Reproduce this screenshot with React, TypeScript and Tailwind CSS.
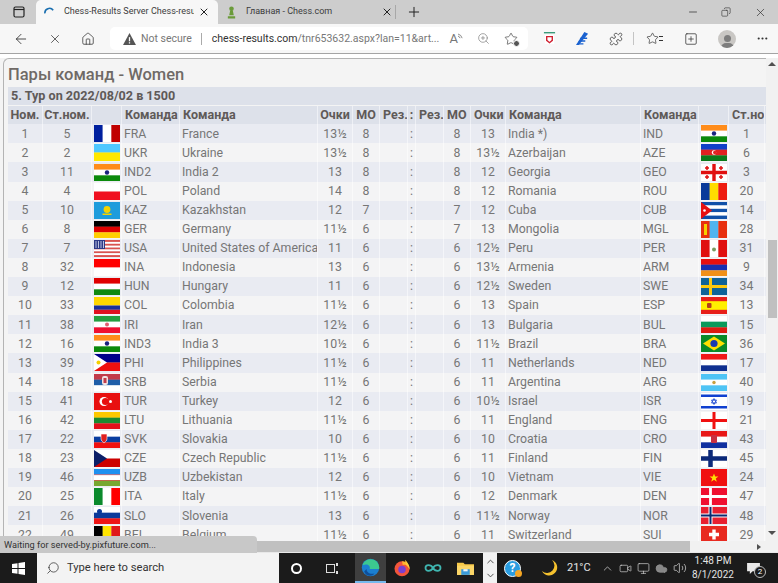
import React from 'react';
import { ArrowLeft, X, Home, ZoomIn, Star, Plus, Minus, Copy, MoreHorizontal, Search, ChevronUp, ChevronDown, Volume2, Monitor, Video, Cloud, Puzzle, SquarePlus } from 'lucide-react';

type Row = [number, number, string, string, string, number, number, string, string, string, number];

const rows: Row[] = [
    [1, 5, 'FRA', 'France', '13½', 8, 8, '13', 'India *)', 'IND', 1],
    [2, 2, 'UKR', 'Ukraine', '13½', 8, 8, '13½', 'Azerbaijan', 'AZE', 6],
    [3, 11, 'IND2', 'India 2', '13', 8, 8, '12', 'Georgia', 'GEO', 3],
    [4, 4, 'POL', 'Poland', '14', 8, 8, '12', 'Romania', 'ROU', 20],
    [5, 10, 'KAZ', 'Kazakhstan', '12', 7, 7, '12', 'Cuba', 'CUB', 14],
    [6, 8, 'GER', 'Germany', '11½', 6, 7, '13', 'Mongolia', 'MGL', 28],
    [7, 7, 'USA', 'United States of America', '11', 6, 6, '12½', 'Peru', 'PER', 31],
    [8, 32, 'INA', 'Indonesia', '13', 6, 6, '13½', 'Armenia', 'ARM', 9],
    [9, 12, 'HUN', 'Hungary', '11', 6, 6, '12½', 'Sweden', 'SWE', 34],
    [10, 33, 'COL', 'Colombia', '11½', 6, 6, '13', 'Spain', 'ESP', 13],
    [11, 38, 'IRI', 'Iran', '12½', 6, 6, '13', 'Bulgaria', 'BUL', 15],
    [12, 16, 'IND3', 'India 3', '10½', 6, 6, '11½', 'Brazil', 'BRA', 36],
    [13, 39, 'PHI', 'Philippines', '11½', 6, 6, '11', 'Netherlands', 'NED', 17],
    [14, 18, 'SRB', 'Serbia', '11½', 6, 6, '11', 'Argentina', 'ARG', 40],
    [15, 41, 'TUR', 'Turkey', '12', 6, 6, '10½', 'Israel', 'ISR', 19],
    [16, 42, 'LTU', 'Lithuania', '11½', 6, 6, '11', 'England', 'ENG', 21],
    [17, 22, 'SVK', 'Slovakia', '10', 6, 6, '10', 'Croatia', 'CRO', 43],
    [18, 23, 'CZE', 'Czech Republic', '11½', 6, 6, '11', 'Finland', 'FIN', 45],
    [19, 46, 'UZB', 'Uzbekistan', '12', 6, 6, '10', 'Vietnam', 'VIE', 24],
    [20, 25, 'ITA', 'Italy', '11½', 6, 6, '12', 'Denmark', 'DEN', 47],
    [21, 26, 'SLO', 'Slovenia', '13', 6, 6, '11½', 'Norway', 'NOR', 48],
    [22, 49, 'BEL', 'Belgium', '11½', 6, 6, '11', 'Switzerland', 'SUI', 29],
];

// simple stripes: horizontal unless vertical is set
const H = ({ c }: { c: string[] }) => (
    <>
        {c.map((col, i) => (
            <rect key={i} x="0" y={(i * 17) / c.length} width="26" height={17 / c.length + 0.2} fill={col} />
        ))}
    </>
);
const V = ({ c }: { c: string[] }) => (
    <>
        {c.map((col, i) => (
            <rect key={i} x={(i * 26) / c.length} y="0" width={26 / c.length + 0.2} height="17" fill={col} />
        ))}
    </>
);

const flagShapes: Record<string, React.ReactNode> = {
    FRA: <V c={['#00209f', '#ffffff', '#c00000']} />,
    UKR: <H c={['#4fc8ff', '#ffe800']} />,
    IND: <><H c={['#ff8c1a', '#ffffff', '#0b8a0b']} /><circle cx="13" cy="8.5" r="2.2" fill="#1a237e" /></>,
    POL: <H c={['#ffffff', '#f01020']} />,
    KAZ: <><rect width="26" height="17" fill="#1e9cdc" /><circle cx="13" cy="7.5" r="3.4" fill="#f5d400" /><rect x="8.5" y="11.5" width="9" height="1.5" fill="#f5d400" /></>,
    GER: <H c={['#000000', '#dd0000', '#ffce00']} />,
    USA: <><H c={['#d9534f', '#ffffff', '#d9534f', '#ffffff', '#d9534f', '#ffffff', '#d9534f', '#ffffff', '#d9534f']} /><rect width="11" height="9" fill="#2e3a87" /><path d="M2 1v7M4.5 1v7M7 1v7M9.5 1v7" stroke="#dfe3f5" strokeWidth="0.8" /></>,
    INA: <H c={['#ff0000', '#ffffff']} />,
    HUN: <H c={['#e00000', '#ffffff', '#108a10']} />,
    COL: <><rect width="26" height="8.5" fill="#ffd600" /><rect y="8.5" width="26" height="4.3" fill="#1a2f9a" /><rect y="12.8" width="26" height="4.2" fill="#e01020" /></>,
    IRI: <><H c={['#239f40', '#ffffff', '#f01030']} /><circle cx="13" cy="8.5" r="2" fill="#e06070" /></>,
    PHI: <><H c={['#00008b', '#ee1010']} /><path d="M0 0L13 8.5L0 17Z" fill="#ffffff" /><circle cx="4.5" cy="8.5" r="2" fill="#f5d000" /></>,
    SRB: <><H c={['#c23b4a', '#1f5ea8', '#ffffff']} /><rect x="8" y="2" width="6" height="9" rx="2" fill="#f0e0e0" /><rect x="9.5" y="4" width="3" height="5" fill="#c23b4a" /></>,
    TUR: <><rect width="26" height="17" fill="#e81010" /><circle cx="10" cy="8.5" r="4.5" fill="#ffffff" /><circle cx="11.5" cy="8.5" r="3.6" fill="#e81010" /><circle cx="16.5" cy="8.5" r="1.5" fill="#ffffff" /></>,
    LTU: <H c={['#fdc800', '#1a8a30', '#e0101a']} />,
    SVK: <><H c={['#ffffff', '#0b3ea0', '#f01010']} /><path d="M7 3h6v5q0 2-3 4q-3-2-3-4Z" fill="#e02020" stroke="#fff" strokeWidth="0.6" /></>,
    CZE: <><H c={['#ffffff', '#cc0000']} /><path d="M0 0L13 8.5L0 17Z" fill="#0c1f68" /></>,
    UZB: <><H c={['#1e90f0', '#ffffff', '#77a830']} /><rect y="5.5" width="26" height="0.6" fill="#d03030" /><rect y="11" width="26" height="0.6" fill="#d03030" /></>,
    ITA: <V c={['#0b8a2c', '#ffffff', '#ff0000']} />,
    SLO: <><H c={['#ffffff', '#0b3a9a', '#ee1515']} /><circle cx="5.5" cy="4.5" r="2.5" fill="#0b3a9a" /></>,
    BEL: <V c={['#000000', '#ffe400', '#e01a1a']} />,
    AZE: <><H c={['#1040c8', '#e02020', '#0a7a1a']} /><circle cx="13" cy="8.5" r="2.2" fill="#ffffff" /><circle cx="13.8" cy="8.5" r="1.8" fill="#e02020" /></>,
    GEO: <><rect width="26" height="17" fill="#ffffff" /><path d="M13 0v17M0 8.5h26" stroke="#e01010" strokeWidth="3.4" /><path d="M6 2v4M4 4h4M20 2v4M18 4h4M6 11v4M4 13h4M20 11v4M18 13h4" stroke="#e01010" strokeWidth="1.5" /></>,
    ROU: <V c={['#0a3a9a', '#ffdc00', '#ee1c10']} />,
    CUB: <><H c={['#1050a8', '#ffffff', '#1050a8', '#ffffff', '#1050a8']} /><path d="M0 0L11 8.5L0 17Z" fill="#e81010" /><circle cx="3.5" cy="8.5" r="1.3" fill="#ffffff" /></>,
    MGL: <><V c={['#e8300f', '#50b4ef', '#e8300f']} /><rect x="3" y="3" width="3" height="11" fill="#f5d000" /></>,
    PER: <><V c={['#e01010', '#ffffff', '#e01010']} /><circle cx="13" cy="9.5" r="2" fill="#7a9a60" /></>,
    ARM: <H c={['#e81010', '#1a2fb0', '#f09018']} />,
    SWE: <><rect width="26" height="17" fill="#0f6398" /><path d="M9.5 0v17M0 8.5h26" stroke="#fcc80e" strokeWidth="3" /></>,
    ESP: <><rect width="26" height="17" fill="#e8201a" /><rect y="4.2" width="26" height="8.6" fill="#fff000" /><rect x="6" y="6" width="4.5" height="5" rx="1" fill="#b5401a" /></>,
    BUL: <H c={['#ffffff', '#0a9a5a', '#dd1c10']} />,
    BRA: <><rect width="26" height="17" fill="#0a8a28" /><path d="M13 1.5L24 8.5L13 15.5L2 8.5Z" fill="#ffe000" /><circle cx="13" cy="8.5" r="3.6" fill="#1a3ab0" /></>,
    NED: <H c={['#f01818', '#ffffff', '#103090']} />,
    ARG: <><H c={['#4fc4f5', '#ffffff', '#4fc4f5']} /><circle cx="13" cy="8.5" r="1.7" fill="#c8a040" /></>,
    ISR: <><rect width="26" height="17" fill="#ffffff" /><rect y="1.5" width="26" height="2.5" fill="#1040d0" /><rect y="13" width="26" height="2.5" fill="#1040d0" /><path d="M13 5.5L15.5 10H10.5ZM13 11.5L10.5 7H15.5Z" fill="none" stroke="#1040d0" strokeWidth="0.8" /></>,
    ENG: <><rect width="26" height="17" fill="#ffffff" /><path d="M13 0v17M0 8.5h26" stroke="#f01010" strokeWidth="3" /></>,
    CRO: <><H c={['#e81818', '#ffffff', '#1030a0']} /><rect x="10" y="4" width="6" height="8" rx="1" fill="#c83040" /></>,
    FIN: <><rect width="26" height="17" fill="#ffffff" /><path d="M9.5 0v17M0 8.5h26" stroke="#0c2a7a" strokeWidth="4.5" /></>,
    VIE: <><rect width="26" height="17" fill="#f01010" /><path d="M13 4.5l1.2 3h3.2l-2.6 2 1 3.2-2.8-2-2.8 2 1-3.2-2.6-2h3.2Z" fill="#ffe000" /></>,
    DEN: <><rect width="26" height="17" fill="#f01030" /><path d="M9.5 0v17M0 8.5h26" stroke="#ffffff" strokeWidth="2.8" /></>,
    NOR: <><rect width="26" height="17" fill="#e82030" /><path d="M9.5 0v17M0 8.5h26" stroke="#ffffff" strokeWidth="4" /><path d="M9.5 0v17M0 8.5h26" stroke="#0c2a70" strokeWidth="2" /></>,
    SUI: <><rect width="26" height="17" fill="#e82a20" /><path d="M13 3.5v10M8 8.5h10" stroke="#ffffff" strokeWidth="3.4" /></>,
};
flagShapes.IND2 = flagShapes.IND;
flagShapes.IND3 = flagShapes.IND;

const Flag = ({ code }: { code: string }) => (
    <svg viewBox="0 0 26 17" className="w-[26px] h-[17px] block">{flagShapes[code]}</svg>
);

const gridCols = 'grid grid-cols-[35px_49px_30px_58px_138px_35px_27px_28px_8px_28px_27px_35px_135px_58px_30px_36px]';

const headers = ['Ном.', 'Ст.ном.', '', 'Команда', 'Команда', 'Очки', 'МО', 'Рез.', ':', 'Рез.', 'МО', 'Очки', 'Команда', 'Команда', '', 'Ст.ном.'];

const cell = 'border-r border-white/50 flex items-center overflow-hidden whitespace-nowrap';

const TableRow = ({ r, odd }: { r: Row; odd: boolean }) => (
    <div className={`${gridCols} h-[19.1px] text-[12.3px] text-[#767676] ${odd ? 'bg-[#e9ebf2]' : 'bg-[#f4f4f5]'}`}>
        <div className={`${cell} justify-center`}>{r[0]}</div>
        <div className={`${cell} justify-center`}>{r[1]}</div>
        <div className={`${cell} justify-center`}><Flag code={r[2]} /></div>
        <div className={`${cell} pl-[2px]`}>{r[2]}</div>
        <div className={`${cell} pl-[2px]`}>{r[3]}</div>
        <div className={`${cell} justify-center`}>{r[4]}</div>
        <div className={`${cell} justify-center`}>{r[5]}</div>
        <div className={cell}></div>
        <div className={`${cell} justify-center`}>:</div>
        <div className={cell}></div>
        <div className={`${cell} justify-center`}>{r[6]}</div>
        <div className={`${cell} justify-center`}>{r[7]}</div>
        <div className={`${cell} pl-[2px]`}>{r[8]}</div>
        <div className={`${cell} pl-[2px]`}>{r[9]}</div>
        <div className={`${cell} justify-center`}><Flag code={r[9]} /></div>
        <div className={`${cell} justify-center`}>{r[10]}</div>
    </div>
);

const EdgeIcon = () => (
    <svg viewBox="0 0 24 24" className="w-[19px] h-[19px]">
        <circle cx="12" cy="12" r="11" fill="#1b7fd0" />
        <path d="M2 9C4 2 12 0 17 2.5C21 4.5 23.5 9 23 14H11C12 9 8 7 2 9Z" fill="#3cc88f" />
        <path d="M7 14C7 19 12 21 17 19.5C14 24 6 23 4 17Z" fill="#0f4f9a" />
    </svg>
);

const FirefoxIcon = () => (
    <svg viewBox="0 0 24 24" className="w-[18px] h-[18px]">
        <circle cx="12" cy="13" r="10" fill="#f2553a" />
        <path d="M12 3C18 3 23 8 22 15C21 8 16 7 13 8Z" fill="#ffb52e" />
        <path d="M16 1C19 4 22 8 22 13L17 7Z" fill="#ffc93a" />
        <circle cx="12" cy="14" r="5" fill="#7a3fd1" />
    </svg>
);

const FolderIcon = () => (
    <svg viewBox="0 0 24 20" className="w-[17px] h-[15px]">
        <path d="M0 2h9l2 2h13v15H0Z" fill="#f7c948" />
        <rect y="6" width="24" height="13" fill="#fbd668" />
        <rect x="6" y="11" width="12" height="8" fill="#3a9ad9" />
        <rect x="9" y="11" width="6" height="3" fill="#f7f7f7" />
    </svg>
);

const App: React.FC = () => {
    return (
        <div className="relative w-[778px] h-[583px] overflow-hidden flex flex-col bg-[#f4f4f4] font-['Roboto','Open_Sans',sans-serif]">
            {/* tab strip */}
            <div className="h-[24px] shrink-0 bg-[#cdcdcd] flex items-end text-[#3c3c3c] text-[9px]">
                <div className="w-[36px] h-full flex items-center justify-center pl-[2px]">
                    <svg viewBox="0 0 12 12" className="w-[12px] h-[12px]" fill="none" stroke="#222" strokeWidth="1.2">
                        <rect x="1" y="1" width="10" height="10" rx="1.5" />
                        <path d="M1 3.5h10" />
                    </svg>
                </div>
                <div className="w-[182px] h-full bg-[#f7f7f7] rounded-t-[5px] flex items-center pl-[8px] pr-[8px]">
                    <svg viewBox="0 0 12 12" className="w-[11px] h-[11px] shrink-0" fill="none" stroke="#1a6fb0" strokeWidth="1.8">
                        <path d="M1 7A5 5 0 0 1 10 3.5" />
                    </svg>
                    <span className="ml-[9px] w-[130px] overflow-hidden whitespace-nowrap">Chess-Results Server Chess-resul</span>
                    <X size={12} strokeWidth={2} className="ml-auto text-[#222]" />
                </div>
                <div className="w-[177px] h-full flex items-center pl-[8px] pr-[2px]">
                    <svg viewBox="0 0 12 14" className="w-[11px] h-[13px] shrink-0" fill="#6b9b3a">
                        <circle cx="6" cy="3" r="2.5" />
                        <path d="M4.5 5h3L8.5 10h-5ZM2 11h8v2.5H2Z" />
                    </svg>
                    <span className="ml-[9px] whitespace-nowrap">Главная - Chess.com</span>
                    <X size={12} strokeWidth={2} className="ml-auto text-[#222]" />
                </div>
                <div className="w-px h-[14px] bg-[#a8a8a8] mb-[5px]"></div>
                <div className="ml-[10px] h-full flex items-center">
                    <Plus size={16} strokeWidth={1.5} className="text-[#222]" />
                </div>
                <div className="ml-auto h-full flex items-center text-[#333]">
                    <Minus size={12} strokeWidth={1.5} className="mr-[22px]" />
                    <Copy size={10} strokeWidth={1.5} className="mr-[23px] -scale-x-100" />
                    <X size={13} strokeWidth={1.3} className="mr-[11px]" />
                </div>
            </div>

            {/* toolbar */}
            <div className="h-[29px] shrink-0 bg-[#f7f7f7] flex items-center text-[#333]">
                <ArrowLeft size={16} strokeWidth={1.3} className="ml-[13px]" />
                <X size={14} strokeWidth={1.3} className="ml-[19px]" />
                <Home size={14} strokeWidth={1.3} className="ml-[19px]" />
                <div className="ml-[15px] w-[418px] h-[23px] bg-white rounded-[5px] flex items-center text-[10.5px]">
                    <svg viewBox="0 0 14 13" className="ml-[13px] w-[13px] h-[12px] shrink-0" fill="#555">
                        <path d="M7 0L14 13H0Z" />
                        <rect x="6.3" y="4.5" width="1.4" height="4.5" fill="#fff" />
                        <rect x="6.3" y="10" width="1.4" height="1.4" fill="#fff" />
                    </svg>
                    <span className="ml-[5px] text-[#777] whitespace-nowrap">Not secure</span>
                    <span className="ml-[9px] w-px h-[12px] bg-[#aaa]"></span>
                    <span className="ml-[10px] text-[#333] whitespace-nowrap">chess-results.com<span className="text-[#777]">/tnr653632.aspx?lan=11&amp;art...</span></span>
                    <span className="ml-auto flex items-center text-[#777] shrink-0">
                        <span className="text-[13px] leading-none">A</span>
                        <svg viewBox="0 0 6 8" className="w-[5px] h-[7px] mb-[4px]" fill="none" stroke="#777"><path d="M0 1q4 1 5 5M0 3.5q2 .5 2.5 2.5" /></svg>
                        <ZoomIn size={13} strokeWidth={1.2} className="ml-[14px]" />
                        <span className="relative ml-[14px] mr-[10px]">
                            <Star size={14} strokeWidth={1.2} className="text-[#444]" />
                            <span className="absolute right-[-2px] bottom-[-1px] w-[7px] h-[7px] rounded-full bg-[#555] border border-white"></span>
                        </span>
                    </span>
                </div>
                <svg viewBox="0 0 14 14" className="ml-[15px] w-[13px] h-[13px]">
                    <rect x="1" width="12" height="1.5" fill="#3a9a7a" />
                    <rect x="2" y="3" width="10" height="10" fill="#fff" />
                    <path d="M4 5h6v4l-3 2.5L4 9Z" fill="none" stroke="#d02030" strokeWidth="1.5" />
                </svg>
                <svg viewBox="0 0 14 14" className="ml-[20px] w-[13px] h-[13px]" fill="#1a62d0">
                    <path d="M9 0L13 2L3 14H0Z" />
                    <path d="M5 6h7v1.5H4ZM3.5 9H10v1.5H2.5ZM2 12h6v1.5H1Z" />
                </svg>
                <Puzzle size={14} strokeWidth={1.3} className="ml-[20px]" />
                <span className="ml-[10px] w-px h-[13px] bg-[#c4c4c4]"></span>
                <span className="ml-[12px] relative flex items-center">
                    <Star size={13} strokeWidth={1.3} />
                    <span className="w-[4px] h-[5px] border-y border-[#333]"></span>
                </span>
                <SquarePlus size={14} strokeWidth={1.3} className="ml-[21px]" />
                <span className="ml-[20px] w-[18px] h-[18px] rounded-full bg-[#c9c7c4] flex flex-col items-center justify-end overflow-hidden">
                    <span className="w-[7px] h-[7px] rounded-full bg-[#7d7d7d] mb-[1px]"></span>
                    <span className="w-[13px] h-[5px] rounded-t-full bg-[#7d7d7d]"></span>
                </span>
                <MoreHorizontal size={13} strokeWidth={2} className="ml-[20px]" />
            </div>
            <div className="h-px shrink-0 bg-[#a4a4a4]"></div>
            <div className="h-[4px] shrink-0 bg-white"></div>

            {/* page */}
            <div className="flex-1 min-h-0 flex">
                <div className="flex-1 min-w-0 flex flex-col">
                    <div className="flex-1 min-h-0 overflow-hidden pl-[3px]">
                        <div className="w-[763px] border-l border-t border-[#b4b4b4] rounded-tl-[6px] pl-[4px]">
                            <h1 className="h-[28px] pt-[5px] text-[16.5px] leading-[22px] font-medium text-[#6f6a66]">Пары команд - Women</h1>
                            <div className="h-[18px] bg-[#dde1ea] pl-[3px] flex items-center text-[12.6px] font-bold text-[#5f5a58]">5. Тур on 2022/08/02 в 1500</div>
                            <div className={`${gridCols} h-[18.3px] mt-px text-[12.5px] font-bold text-[#5f5a58] bg-[#dde1ea]`}>
                                {headers.map((h, i) => (
                                    <div key={i} className={`${cell} px-[3px] ${i === 0 || i === 1 || i === 5 || i === 6 ? 'justify-center' : ''} ${i === 8 ? 'justify-center px-0' : ''}`}>{h}</div>
                                ))}
                            </div>
                            {rows.map((r, i) => (
                                <TableRow key={r[0]} r={r} odd={i % 2 === 0} />
                            ))}
                        </div>
                    </div>
                    {/* horizontal scrollbar */}
                    <div className="h-[11px] shrink-0 bg-[#f1f1f1] flex items-center">
                        <div className="w-[690px] h-full bg-[#c0c0c0]"></div>
                        <div className="ml-auto mr-[5px] w-0 h-0 border-y-[3px] border-y-transparent border-l-[4px] border-l-[#505050]"></div>
                    </div>
                </div>
                {/* vertical scrollbar */}
                <div className="w-[12px] shrink-0 bg-[#f1f1f1] flex flex-col items-center pt-[4px] pb-[17px]">
                    <div className="w-0 h-0 border-x-[4px] border-x-transparent border-b-[4px] border-b-[#505050]"></div>
                    <div className="mt-[174px] w-[9px] h-[78px] bg-[#c0c0c0]"></div>
                    <div className="mt-auto w-0 h-0 border-x-[4px] border-x-transparent border-t-[4px] border-t-[#505050]"></div>
                </div>
            </div>

            {/* taskbar */}
            <div className="h-[1px] shrink-0 bg-[#e8e8e8]"></div>
            <div className="h-[30px] shrink-0 bg-[#1b1b1b] flex items-center text-white">
                <div className="w-[37px] h-full flex items-center justify-center">
                    <svg viewBox="0 0 13 13" className="w-[13px] h-[13px]" fill="#fff">
                        <path d="M0 2l5.5-.8V6H0ZM6.5 1L13 0v6H6.5ZM0 7h5.5v4.8L0 11ZM6.5 7H13v6l-6.5-1Z" />
                    </svg>
                </div>
                <div className="w-[242px] h-full bg-[#f3f3f3] flex items-center text-[#333] text-[11.2px]">
                    <Search size={14} strokeWidth={1.3} className="ml-[9px] -scale-x-100" />
                    <span className="ml-[7px]">Type here to search</span>
                </div>
                <div className="ml-[12px] w-[11px] h-[11px] rounded-full border-2 border-white"></div>
                <div className="ml-[24px] w-[13px] h-[11px] flex items-center gap-[1px]">
                    <span className="w-[9px] h-[9px] border border-[#ddd]"></span>
                    <span className="w-[2px] h-[11px] border-y-[3px] border-[#ddd]"></span>
                </div>
                <div className="ml-[16px] relative w-[31px] h-full bg-[#3f3f3f] flex items-center justify-center border-b-2 border-[#76b9ed]">
                    <EdgeIcon />
                </div>
                <div className="ml-[7px] w-[18px] flex justify-center"><FirefoxIcon /></div>
                <svg viewBox="0 0 24 12" className="ml-[13px] w-[18px] h-[10px]" fill="none" stroke="#3fb5b0" strokeWidth="2.4">
                    <path d="M12 6C9 1 2 1 2 6s7 5 10 0s10-5 10 0s-7 5-10 0Z" />
                </svg>
                <div className="ml-[15px]"><FolderIcon /></div>
                <div className="ml-[9px] w-[14px] h-full bg-[#f2f2f2] flex flex-col items-center justify-center gap-[3px] text-[#444]">
                    <ChevronUp size={11} strokeWidth={2} />
                    <ChevronDown size={11} strokeWidth={2} />
                </div>
                <div className="ml-[7px] relative w-[17px] h-[17px] rounded-full bg-[#2a9de0] border border-white flex items-center justify-center text-[12px] font-bold leading-none">
                    ?
                    <span className="absolute -right-[2px] -bottom-[1px] w-[7px] h-[7px] rounded-full bg-[#f5a623]"></span>
                </div>
                <svg viewBox="0 0 18 18" className="ml-[20px] w-[18px] h-[18px]" fill="#f5c12e">
                    <path d="M11 1A8 8 0 1 1 1 12A7 7 0 0 0 11 1Z" />
                </svg>
                <span className="ml-[8px] w-[26px] shrink-0 text-[11px] text-[#e4e4e4]">21°C</span>
                <ChevronUp size={13} strokeWidth={1.3} className="ml-[8px] text-[#ddd]" />
                <Video size={13} strokeWidth={1.2} className="ml-[5px] text-[#ddd]" />
                <Monitor size={13} strokeWidth={1.2} className="ml-[5px] text-[#ddd]" />
                <Cloud size={13} strokeWidth={1.2} className="ml-[5px] text-[#999]" fill="#888" />
                <Volume2 size={14} strokeWidth={1.2} className="ml-[5px] text-[#ddd]" />
                <div className="ml-[1px] w-[50px] flex flex-col items-center text-[10px] leading-[14px] text-[#e4e4e4]">
                    <span>1:48 PM</span>
                    <span>8/1/2022</span>
                </div>
                <div className="relative ml-[9px]">
                    <svg viewBox="0 0 14 12" className="w-[13px] h-[11px] block" fill="#e8e8e8">
                        <path d="M0 0h14v9H6L3 12V9H0Z" />
                    </svg>
                    <span className="absolute -right-[6px] -bottom-[4px] w-[12px] h-[12px] rounded-full bg-[#1b1b1b] border border-[#bbb] flex items-center justify-center text-[8px] leading-none">2</span>
                </div>
            </div>

            {/* status bubble */}
            <div className="absolute left-0 top-[536px] w-[257px] h-[17px] bg-[#c8c8c8] rounded-tr-[4px] pl-[4px] flex items-center text-[9.2px] text-[#333]">
                Waiting for served-by.pixfuture.com...
            </div>
        </div>
    );
};

export default App;
